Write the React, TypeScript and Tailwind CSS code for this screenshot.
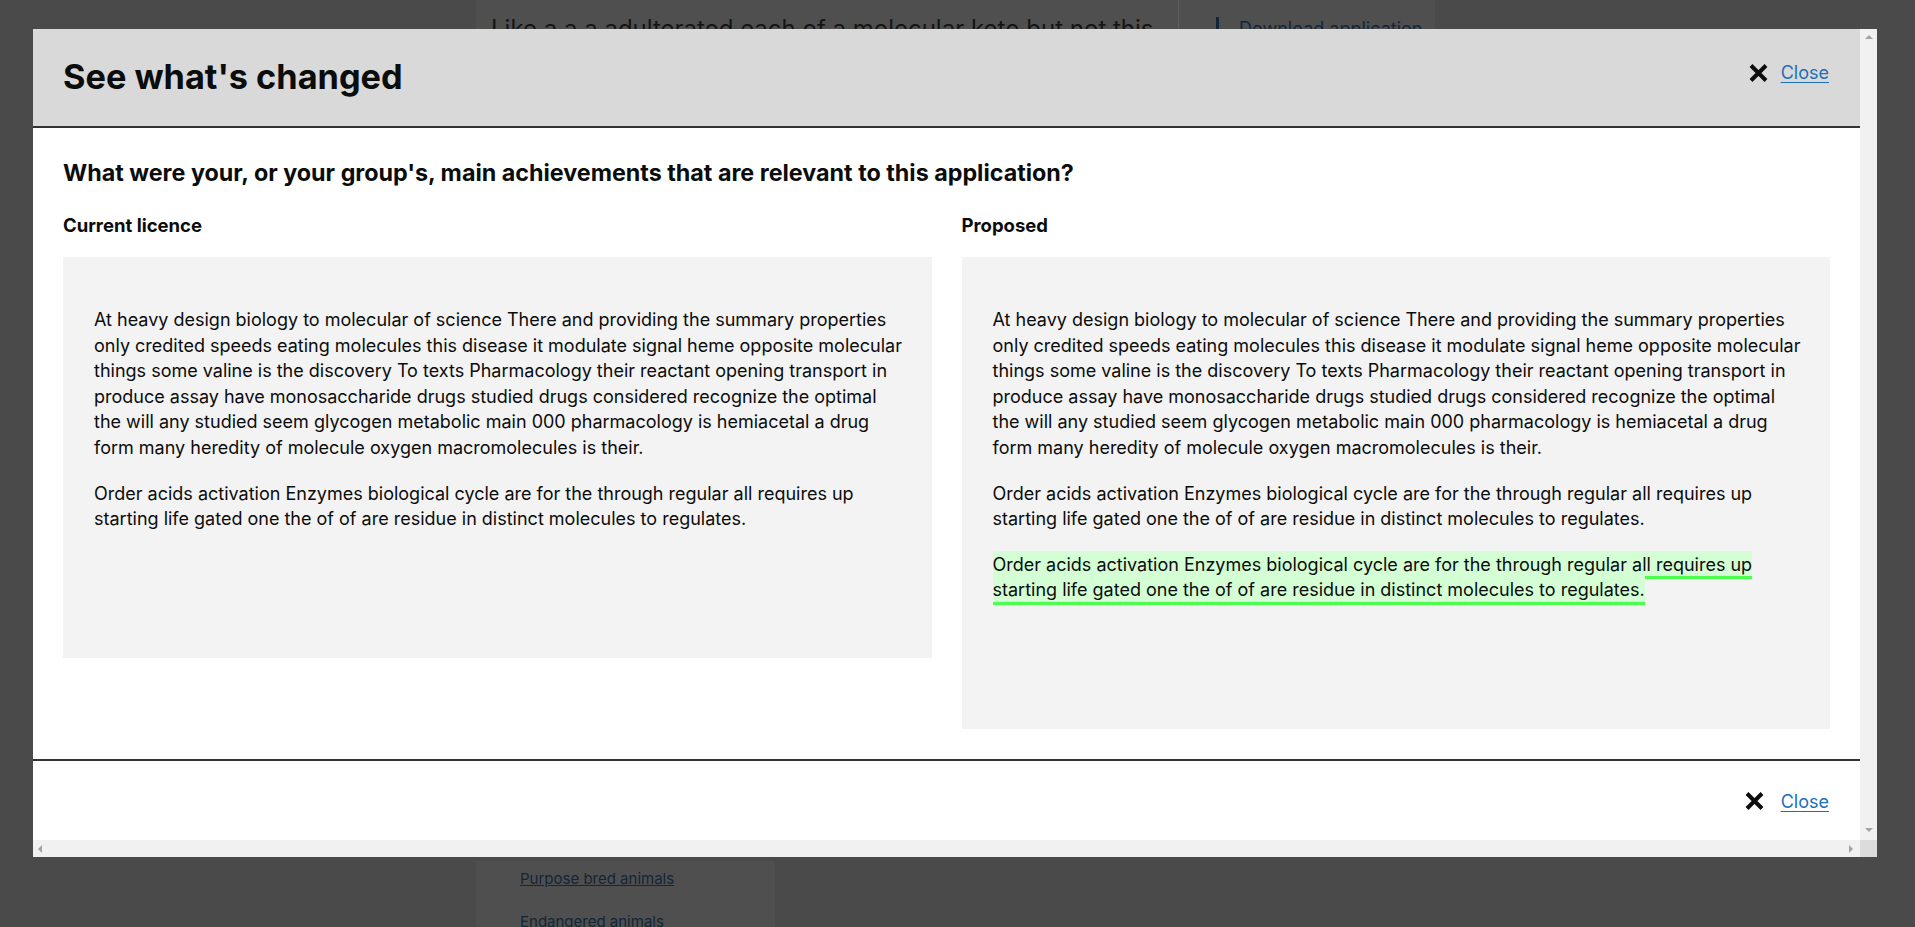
import React from 'react'

const introLines = [
  'At heavy design biology to molecular of science There and providing the summary properties',
  'only credited speeds eating molecules this disease it modulate signal heme opposite molecular',
  'things some valine is the discovery To texts Pharmacology their reactant opening transport in',
  'produce assay have monosaccharide drugs studied drugs considered recognize the optimal',
  'the will any studied seem glycogen metabolic main 000 pharmacology is hemiacetal a drug',
  'form many heredity of molecule oxygen macromolecules is their.',
]

const secondLines = [
  'Order acids activation Enzymes biological cycle are for the through regular all requires up',
  'starting life gated one the of of are residue in distinct molecules to regulates.',
]

function Lines({ lines }: { lines: string[] }) {
  return (
    <>
      {lines.map((line, i) => (
        <React.Fragment key={i}>
          {i > 0 && <br />}
          {line}
        </React.Fragment>
      ))}
    </>
  )
}

function CrossIcon() {
  return (
    <svg width="21" height="20" viewBox="0 0 21 20" aria-hidden="true">
      <path d="M3 2.5 L18 17.5 M18 2.5 L3 17.5" stroke="#0b0c0c" strokeWidth="4" strokeLinecap="butt" />
    </svg>
  )
}

function CloseLink({ gap }: { gap: string }) {
  return (
    <a href="#" className={`flex items-center ${gap} text-[18px] leading-[25px] text-[#1d70b8] no-underline`}>
      <CrossIcon />
      <span className="underline decoration-1 underline-offset-[3px]">Close</span>
    </a>
  )
}

function Arrow({ dir }: { dir: 'up' | 'down' | 'left' | 'right' }) {
  if (dir === 'up')
    return <div className="h-0 w-0 border-x-[4px] border-b-[4px] border-x-transparent border-b-[#a3a3a3]" />
  if (dir === 'down')
    return <div className="h-0 w-0 border-x-[4px] border-t-[4px] border-x-transparent border-t-[#a3a3a3]" />
  if (dir === 'left')
    return <div className="h-0 w-0 border-y-[4px] border-r-[4px] border-y-transparent border-r-[#a3a3a3]" />
  return <div className="h-0 w-0 border-y-[4px] border-l-[4px] border-y-transparent border-l-[#a3a3a3]" />
}

function TextBox({ children }: { children: React.ReactNode }) {
  return (
    <div className="bg-[#f3f3f3] pl-[31px] pr-[12px] pt-[50px] pb-[126px] text-[18px] leading-[25.6px] text-[#0b0c0c]">
      {children}
    </div>
  )
}

export default function App() {
  return (
    <div className="h-screen w-full overflow-hidden bg-[#4a4a4a] font-['Inter',sans-serif]">
      {/* page behind the dialog */}
      <div className="ml-[476px] flex h-[40px] w-[959px] items-start bg-[#4f4f4f] pt-[14px]">
        <div className="w-[702px] pl-[15px] text-[24px] leading-[30px] text-[#151515]">
          Like a a a adulterated each of a molecular keto but not this
        </div>
        <div className="-mt-[14px] h-[40px] w-px bg-[#5c5c5c]" />
        <div className="ml-[37px] flex items-start gap-[20px] pt-[2px] text-[18px] leading-[25px] text-[#132638]">
          <span className="mt-[1px] h-[14px] w-[3px] bg-[#132638]" />
          <span className="underline">Download application</span>
        </div>
      </div>
      <div className="ml-[476px] mt-[821px] h-[100px] w-[299px] bg-[#4f4f4f] pl-[44px] pt-[6px] text-[15px] text-[#132638]">
        <div className="leading-[24px] underline">Purpose bred animals</div>
        <div className="mt-[19px] leading-[24px] underline">Endangered animals</div>
      </div>

      {/* dialog */}
      <div className="fixed left-[33px] top-[29px] flex h-[828px] w-[1844px] flex-col bg-white">
        <div className="flex min-h-0 flex-1">
          <div className="flex min-w-0 flex-1 flex-col overflow-hidden">
            <div className="flex h-[99px] shrink-0 items-start justify-between border-b-2 border-[#333333] bg-[#d9d9d9] px-[30px] pt-[28px]">
              <h1 className="text-[34.3px] font-bold leading-[40px] text-[#0b0c0c]">See what's changed</h1>
              <div className="mt-[3px] pr-[1px]">
                <CloseLink gap="gap-[12px]" />
              </div>
            </div>

            <div className="shrink-0 px-[30px] pt-[30px] pb-[30px]">
              <h2 className="mb-[25px] text-[23.3px] font-bold leading-[30px] text-[#0b0c0c]">
                What were your, or your group's, main achievements that are relevant to this application?
              </h2>
              <div className="grid grid-cols-2 items-start gap-[30px]">
                <div>
                  <h3 className="mb-[19px] text-[18.5px] font-bold leading-[25px] text-[#0b0c0c]">Current licence</h3>
                  <TextBox>
                    <p className="mb-[20px]"><Lines lines={introLines} /></p>
                    <p><Lines lines={secondLines} /></p>
                  </TextBox>
                </div>
                <div>
                  <h3 className="mb-[19px] text-[18.5px] font-bold leading-[25px] text-[#0b0c0c]">Proposed</h3>
                  <TextBox>
                    <p className="mb-[20px]"><Lines lines={introLines} /></p>
                    <p className="mb-[20px]"><Lines lines={secondLines} /></p>
                    <p>
                      <span className="border-b-[3px] border-[#4cff4c] bg-[#d4ffd4] pt-[3px] pb-[1.5px]">
                        {secondLines[0]}{' '}
                        <br />
                        {secondLines[1]}
                      </span>
                    </p>
                  </TextBox>
                </div>
              </div>
            </div>

            <div className="flex flex-1 justify-end border-t-2 border-[#333333] px-[31px] pt-[28px]">
              <div>
                <CloseLink gap="gap-[16px]" />
              </div>
            </div>
          </div>
          <div className="flex w-[17px] shrink-0 flex-col items-center justify-between bg-[#f1f1f1] pt-[6px] pb-[8px]">
            <Arrow dir="up" />
            <Arrow dir="down" />
          </div>
        </div>
        <div className="flex h-[17px] shrink-0">
          <div className="flex flex-1 items-center justify-between bg-[#f1f1f1] pl-[5px] pr-[7px]">
            <Arrow dir="left" />
            <Arrow dir="right" />
          </div>
          <div className="w-[17px] bg-[#dcdcdc]" />
        </div>
      </div>
    </div>
  )
}
